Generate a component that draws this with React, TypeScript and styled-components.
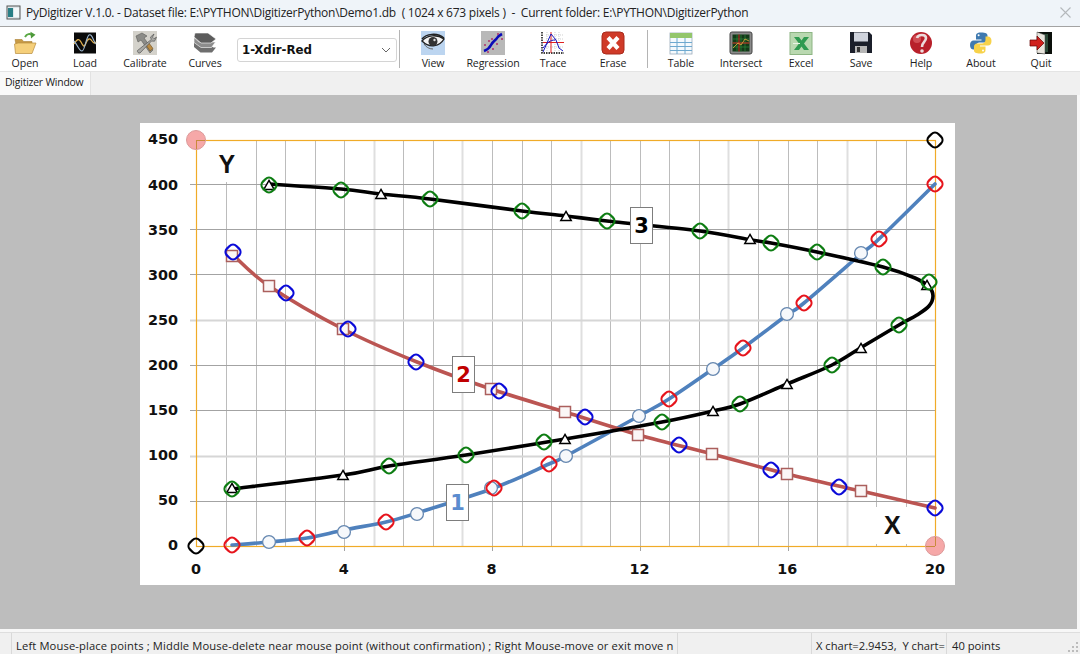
import React from "react";
import styled, { createGlobalStyle } from "styled-components";

const Global = createGlobalStyle`
  html, body { margin: 0; padding: 0; background: #f0f0f0; }
  * { box-sizing: border-box; }
`;

const UI = `"Open Sans", "Noto Sans", sans-serif`;

const Window = styled.div`
  width: 1080px; height: 654px; display: flex; flex-direction: column; overflow: hidden;
  font-family: ${UI}; color: #1a1a1a; background: #f0f0f0;
`;
const TitleBar = styled.div`
  height: 27px; flex: none; display: flex; align-items: center; padding: 0 8px 1px 6px; gap: 5px;
  background: #eff4f9; border-bottom: 1px solid #a3a3a3; font-size: 12px; white-space: pre;
`;
const TitleText = styled.span` flex: 1; letter-spacing: -0.24px; color: #222; `;
const Toolbar = styled.div`
  height: 45px; flex: none; display: flex; align-items: stretch; background: #fff;
  border-bottom: 1px solid #e4e4e4;
`;
const ToolButton = styled.div<{ $first?: boolean }>`
  width: 60px; flex: none; display: flex; flex-direction: column; align-items: center;
  padding-top: 4px; margin-left: ${p => (p.$first ? "-5px" : "0")};
`;
const ToolLabel = styled.span` font-size: 10.6px; line-height: 14px; margin-top: 1px; white-space: nowrap; color: #222; letter-spacing: -0.1px; `;
const Icon = styled.svg` width: 24px; height: 24px; display: block; flex: none; `;
const Combo = styled.div`
  width: 160px; height: 24px; margin: 11px 0 0 2px; flex: none; display: flex; align-items: center;
  justify-content: space-between; padding: 0 5px 0 4px; background: #fff; border: 1px solid #d4d4d4; border-radius: 3px;
  font: bold 11.8px "DejaVu Sans", sans-serif; color: #111;
`;
const Separator = styled.div<{ $after: number; $before: number }>`
  width: 1px; flex: none; background: #b4b4b4; margin: 3px ${p => p.$after}px 3px ${p => p.$before}px;
`;
const TabRow = styled.div` height: 23px; flex: none; background: #f0f0f0; display: flex; `;
const Tab = styled.div`
  width: 91px; background: #f9f9f9; border-right: 1px solid #e2e2e2; font-size: 10.4px; letter-spacing: -0.2px; line-height: 20px; padding-left: 5px; white-space: nowrap;
`;
const WorkArea = styled.div` flex: none; height: 537px; padding: 0 3px 3px 0; background: #f7f7f7; `;
const Canvas = styled.div` height: 534px; background: #bdbdbd; padding: 28px 0 0 140px; `;
const ChartSvg = styled.svg` display: block; width: 815px; height: 462px; background: #fff; `;
const StatusBar = styled.div`
  height: 22px; flex: 1; display: flex; background: #f0f0f0; border-top: 1px solid #dedede; font-size: 11.2px; position: relative;
`;
const Pane = styled.div<{ $w: number; $pad: number; $last?: boolean; $spacing?: number }>`
  width: ${p => p.$w}px; flex: none; padding-left: ${p => p.$pad}px; line-height: 25px; white-space: pre; color: #222;
  border-right: ${p => (p.$last ? "none" : "1px solid #d9d9d9")};
  letter-spacing: ${p => p.$spacing ?? 0}px;
`;
const Grip = styled.svg` position: absolute; right: 1px; bottom: 1px; width: 12px; height: 12px; `;

// --- chart data, in page pixels ---
const X0 = 196, X1 = 935, Y0 = 546, Y1 = 140;
type P = [number, number];

const curve1: P[] = [[232,545],[269,542],[307,538],[344,530],[386,522],[417,513],[494,488],[549,464],[566,456],[639,416],[669,399],[713,369],[743,348],[787,315],[804,303],[861,254],[879,239],[935,184]];
const curve2: P[] = [[233,255],[269,286],[343,329],[417,362],[491,389],[565,412],[639,435],[712,454],[787,474],[861,491],[935,508]];
const curve3: P[] = [[269,184],[341,189],[381,194],[430,199],[522,211],[566,216],[607,221],[700,231],[751,240],[771,243],[817,252],[883,267],[915,278],[929,287],[933,296],[929,306],[917,315],[899,325],[862,347],[832,365],[787,384],[740,404],[713,411],[662,422],[565,439],[466,455],[389,466],[343,475],[232,489]];

const openCircles: P[] = [[269,542],[344,532],[417,514],[491,488],[566,456],[639,416],[713,369],[787,314],[861,253]];
const squares: P[] = [[232,256],[269,286],[343,329],[491,389],[565,412],[638,435],[712,454],[787,474],[861,491]];
const triangles: P[] = [[269,185],[381,194],[566,216],[750,239],[927,285],[861,348],[787,384],[713,411],[565,439],[343,475],[232,488]];
const reds: P[] = [[232,545],[307,538],[386,522],[494,488],[549,464],[669,399],[743,348],[804,303],[879,239],[935,184]];
const blues: P[] = [[233,252],[286,293],[348,329],[416,362],[499,391],[585,417],[679,445],[771,470],[839,487],[935,508]];
const greens: P[] = [[269,185],[341,190],[430,199],[522,211],[607,221],[700,231],[771,243],[817,252],[883,267],[929,282],[899,325],[832,365],[740,404],[662,422],[544,442],[466,455],[389,466],[232,489]];

const H_LINES: [number, boolean][] = [[501, false], [456, true], [410, false], [365, false], [320, true], [274, false], [229, false], [184, false]];
const LIGHT_V = new Set([6, 9, 13, 18, 22]);

function spline(pts: P[]): string {
  let d = `M${pts[0][0]} ${pts[0][1]}`;
  for (let i = 0; i < pts.length - 1; i++) {
    const a = pts[Math.max(i - 1, 0)], b = pts[i], c = pts[i + 1], e = pts[Math.min(i + 2, pts.length - 1)];
    const c1x = b[0] + (c[0] - a[0]) / 6, c1y = b[1] + (c[1] - a[1]) / 6;
    const c2x = c[0] - (e[0] - b[0]) / 6, c2y = c[1] - (e[1] - b[1]) / 6;
    d += `C${c1x.toFixed(1)} ${c1y.toFixed(1)} ${c2x.toFixed(1)} ${c2y.toFixed(1)} ${c[0]} ${c[1]}`;
  }
  return d;
}

const Ring = ({ p, color }: { p: P; color: string }) => (
  <rect x={p[0] - 6.7} y={p[1] - 6.7} width={13.4} height={13.4} rx={4.8} fill="none" stroke={color} strokeWidth={2.2}
    transform={`rotate(45 ${p[0]} ${p[1]})`} />
);

const AxisText = styled.text` font: bold 14.4px "DejaVu Sans", sans-serif; fill: #111; `;
const AxisLetter = styled.text` font: bold 25px "Liberation Sans", sans-serif; fill: #111; `;
const BoxText = styled.text<{ $c: string }>` font: bold 21px "DejaVu Sans", sans-serif; fill: ${p => p.$c}; `;

const NumberBox = ({ x, y, text, color }: { x: number; y: number; text: string; color: string }) => (
  <g>
    <rect x={x + 0.5} y={y + 0.5} width={22} height={36} fill="#fff" stroke="#7d7d7d" />
    <BoxText $c={color} x={x + 11.5} y={y + 26} textAnchor="middle">{text}</BoxText>
  </g>
);

const Chart = () => {
  const vs = Array.from({ length: 24 }, (_, i) => i + 1);
  return (
    <ChartSvg viewBox="140 123 815 462">
      {vs.map(n => {
        const x = Math.round(X0 + 0.4 + n * 29.56) + 0.5;
        return <line key={n} x1={x} x2={x} y1={Y1} y2={Y0} stroke={LIGHT_V.has(n) ? "#dfdfdf" : "#bcbcbc"} strokeWidth={LIGHT_V.has(n) ? 2 : 1} />;
      })}
      {H_LINES.map(([y, light]) => (
        <line key={y} x1={190} x2={X1} y1={y + 0.5} y2={y + 0.5} stroke={light ? "#d6d6d6" : "#a3a3a3"} strokeWidth={light ? 2 : 1} />
      ))}
      {[4, 8, 12, 16].map(u => {
        const x = Math.round(X0 + 0.4 + u * 36.95) + 0.5;
        return <line key={u} x1={x} x2={x} y1={Y0} y2={551} stroke="#a3a3a3" />;
      })}
      <rect x={215} y={141} width={26} height={41} fill="#fff" />
      <rect x={870} y={507} width={40} height={37} fill="#fff" />
      <rect x={X0 + 0.5} y={Y1 + 0.5} width={X1 - X0} height={Y0 - Y1} fill="none" stroke="#f0ab28" strokeWidth={1.2} />

      <path d={spline(curve1)} fill="none" stroke="#4f81bd" strokeWidth={3.6} strokeLinecap="round" />
      <path d={spline(curve2)} fill="none" stroke="#bb5552" strokeWidth={3.6} strokeLinecap="round" />
      <path d={spline(curve3)} fill="none" stroke="#000" strokeWidth={3.6} strokeLinecap="round" />

      {openCircles.map((p, i) => <circle key={i} cx={p[0]} cy={p[1]} r={6.4} fill="#f6f8fb" stroke="#6587b0" strokeWidth={1.3} />)}
      {squares.map((p, i) => <rect key={i} x={p[0] - 5.5} y={p[1] - 5.5} width={11} height={11} fill="#fbf6f6" stroke="#ab5f5d" strokeWidth={1.5} />)}
      {triangles.map((p, i) => <path key={i} d={`M${p[0]} ${p[1] - 4.6}L${p[0] + 5.2} ${p[1] + 4.5}H${p[0] - 5.2}Z`} fill="#fff" stroke="#000" strokeWidth={1.5} />)}
      {greens.map((p, i) => <Ring key={i} p={p} color="#0d7d12" />)}
      {reds.map((p, i) => <Ring key={i} p={p} color="#e6141c" />)}
      {blues.map((p, i) => <Ring key={i} p={p} color="#0a0ad8" />)}

      <circle cx={X0} cy={Y1} r={9.5} fill="#f6a8a8" stroke="#dc9a9a" />
      <line x1={X0} x2={X0 + 9} y1={Y1 + 0.5} y2={Y1 + 0.5} stroke="#c98a3a" />
      <line x1={X0 + 0.5} x2={X0 + 0.5} y1={Y1} y2={Y1 + 9} stroke="#c98a3a" />
      <circle cx={X1} cy={Y0} r={9.5} fill="#f6a8a8" stroke="#dc9a9a" />
      <line x1={X1 - 9} x2={X1} y1={Y0 + 0.5} y2={Y0 + 0.5} stroke="#c98a3a" />
      <line x1={X1 + 0.5} x2={X1 + 0.5} y1={Y0 - 9} y2={Y0} stroke="#c98a3a" />
      <Ring p={[X0, Y0]} color="#000" />
      <Ring p={[X1, Y1]} color="#000" />

      <NumberBox x={446} y={484} text="1" color="#5b8ccf" />
      <NumberBox x={452} y={356} text="2" color="#c00000" />
      <NumberBox x={630} y={207} text="3" color="#000" />

      {[0, 50, 100, 150, 200, 250, 300, 350, 400, 450].map(v => (
        <AxisText key={v} x={178} y={Y0 - v * 0.9022 + 4.4} textAnchor="end">{v}</AxisText>
      ))}
      {[0, 4, 8, 12, 16, 20].map(u => (
        <AxisText key={u} x={X0 + u * 36.95} y={574} textAnchor="middle">{u}</AxisText>
      ))}
      <AxisLetter x={218.5} y={173}>Y</AxisLetter>
      <AxisLetter x={884} y={534}>X</AxisLetter>
    </ChartSvg>
  );
};

// --- toolbar icons ---
const I = ({ children }: { children: React.ReactNode }) => <Icon viewBox="0 0 24 24">{children}</Icon>;

const OpenIcon = () => (
  <I>
    <path d="M2 8.500h7l1.500 2H19v3H3z" fill="#c89a45" stroke="#a97f33" strokeWidth=".6" />
    <path d="M5 12h18l-4 10.500H2.500L1.500 13z" fill="#f5cf7a" stroke="#b88d3e" strokeWidth=".7" />
    <path d="M12 6c2-3.500 5-3.500 7-2" fill="none" stroke="#5aa845" strokeWidth="2" />
    <path d="M17.500 .8l5 3-4.500 3.700z" fill="#4d9a3a" />
  </I>
);
const LoadIcon = () => (
  <I>
    <rect x="1" y="1.500" width="22" height="21" fill="#0a0a0a" />
    <path d="M1 13c3-5 5-6 7-2s3 6 5 1 4-5 6-2 3 2 4 1" fill="none" stroke="#e0b050" strokeWidth="1.300" />
    <path d="M1 10c3 3 5 10 8 10s4-14 7-16 5 8 7 9" fill="none" stroke="#9fb9d2" strokeWidth="1.100" />
  </I>
);
const CalibrateIcon = () => (
  <I>
    <rect width="24" height="24" fill="#d4d2cb" />
    <path d="M3 5l6-3 5 3-3 2 9 12-3 3L8 9 5 11z" fill="#8c8c88" stroke="#5a5a58" strokeWidth=".6" />
    <path d="M13 14l4 6 3-2.500-4.500-6z" fill="#b98a42" stroke="#6e4f1f" strokeWidth=".6" />
    <path d="M21 3l-3.500 3 .8 2.500L4.500 19.500a2 2 0 0 0 2.500 2.500L18.500 10l3 .2 2-4-2.500 1.500-1.500-1.500z" fill="#a8a8a4" stroke="#555" strokeWidth=".7" />
  </I>
);
const CurvesIcon = () => (
  <I>
    <path d="M1 8.500l3-2 2.500 2 14 8 2.500 0-4 5H7.500L1 16z" fill="#6e6e6e" />
    <path d="M1 6.500L6 11h16.500l-4 5.500H8L1 11.500z" fill="#8c8c8c" stroke="#fff" strokeWidth=".6" />
    <path d="M2 2h13l8 6-5 4H8L1 6z" fill="#5c5c5c" stroke="#fff" strokeWidth=".6" />
  </I>
);
const ViewIcon = () => (
  <I>
    <rect width="24" height="24" fill="#bcd5f0" />
    <path d="M1 10c5-6 15-7 22-2-4 7-14 10-22 2z" fill="#f4f4f4" stroke="#222" strokeWidth="1.400" />
    <circle cx="12" cy="10.500" r="4.500" fill="#333" />
    <circle cx="13.500" cy="9" r="1.200" fill="#ddd" />
    <path d="M3 13c2 3 5 5 9 5" fill="none" stroke="#666" />
    <path d="M1 8C5 3 16 1 23 7" fill="none" stroke="#222" strokeWidth="1.500" />
  </I>
);
const RegressionIcon = () => (
  <I>
    <rect width="24" height="24" fill="#b8b8b8" />
    <path d="M3 20c3-1 5-2 7-6s5-5 6-7 3-3 5-4" fill="none" stroke="#0b0bb8" strokeWidth="2.600" />
    <g fill="#b0306a">
      <circle cx="4" cy="14" r="1" /><circle cx="8" cy="10" r="1" /><circle cx="11" cy="8" r="1" />
      <circle cx="17" cy="3" r="1" /><circle cx="21" cy="8" r="1" /><circle cx="16" cy="13" r="1" />
      <circle cx="12" cy="18" r="1" /><circle cx="7" cy="21" r="1" />
    </g>
  </I>
);
const TraceIcon = () => (
  <I>
    <path d="M1 1v21h22" fill="none" stroke="#000" strokeWidth="1.400" strokeDasharray="1.500 1" />
    <path d="M5 4h17M5 8h17M5 16h17M6 1v19M14 1v19M18 1v19" stroke="#bbb" strokeWidth=".7" strokeDasharray="1 1" />
    <path d="M2 11.500h21M10 1v21" stroke="#e02020" strokeWidth="1" />
    <path d="M2 21L10 3l5 6 3 8 4 3M2 17c4-5 7-8 12-8" fill="none" stroke="#1515c0" strokeWidth="1" />
  </I>
);
const EraseIcon = () => (
  <I>
    <rect x="1" y="1" width="22" height="22" rx="4" fill="#cf3a28" stroke="#a82a1c" />
    <path d="M7 6.500l10 11M17 6.500l-10 11" stroke="#fff" strokeWidth="4.200" />
  </I>
);
const TableIcon = () => (
  <I>
    <rect x="1" y="2" width="22" height="21" fill="#f5fafd" stroke="#9ab" strokeWidth=".8" />
    <rect x="1" y="2" width="22" height="5" fill="#93c66b" />
    <path d="M1 11.500h22M1 15.500h22M1 19.500h22M8 7v16M16 7v16" stroke="#6fa9cf" strokeWidth="1" />
  </I>
);
const IntersectIcon = () => (
  <I>
    <rect x="1" y="1" width="22" height="22" rx="2" fill="#8a8a8a" stroke="#444" />
    <rect x="3.500" y="3.500" width="17" height="17" fill="#123a18" />
    <path d="M3.500 8h17M3.500 12h17M3.500 16h17M8 3.500v17M12 3.500v17M16 3.500v17" stroke="#2f8a3c" strokeWidth=".7" />
    <path d="M3.500 12h17M10 3.500v17" stroke="#d42020" strokeWidth="1" />
    <path d="M4 17l5-5 3 2 4-6 4 2" fill="none" stroke="#e8b040" strokeWidth=".8" />
  </I>
);
const ExcelIcon = () => (
  <I>
    <rect x="1" y="1.500" width="22" height="22" fill="#b9d8b0" stroke="#8db584" />
    <path d="M5 6h5l2.500 3.500L15 6h5l-5 6.500 5 6.500h-5l-2.500-3.500L10 19H5l5-6.500z" fill="#2f9a50" />
    <path d="M4 12h7v1H4z" fill="#e8f4e4" />
  </I>
);
const SaveIcon = () => (
  <I>
    <path d="M1 1h19l3 3v18H1z" fill="#1b1f2a" />
    <rect x="5" y="1.500" width="14" height="9" fill="#cfd3dc" />
    <rect x="6" y="15" width="12" height="7" fill="#b6b6b6" />
    <rect x="8" y="16" width="3" height="5" fill="#333" />
  </I>
);
const HelpIcon = () => (
  <I>
    <circle cx="12" cy="12" r="11" fill="#b8202a" />
    <circle cx="8" cy="8" r="4" fill="#e06a70" opacity=".6" />
    <path d="M8 7c1-4 9-4 9 0 0 4-4 4-4 9" fill="none" stroke="#ecdcdc" strokeWidth="2.600" />
    <circle cx="13" cy="20" r="1.800" fill="#ecdcdc" />
  </I>
);
const PY_HALF = "M12 1.500C6.500 1.500 7 4 7 6v2.500h5.500v1H4.500C2.500 9.500 1 11 1 14s1.500 4.500 3.500 4.500H7v-3.300c0-2 1.500-3.700 3.500-3.700h5c1.700 0 3-1.400 3-3V4.500c0-1.700-1.700-3-6.500-3z";
const AboutIcon = () => (
  <I>
    <path d={PY_HALF} fill="#3f7ab0" />
    <path d={PY_HALF} fill="#f7d24a" transform="rotate(180 11.750 12)" />
    <circle cx="9.600" cy="4.300" r="1" fill="#fff" />
    <circle cx="14" cy="19.600" r="1" fill="#fff" />
  </I>
);
const QuitIcon = () => (
  <I>
    <rect x="8" y="1" width="15" height="22" fill="#0a0f0a" />
    <path d="M10 3l9 0v18l-9 0z" fill="#2d4a38" />
    <path d="M8 1l8 3v19l-8-1z" fill="#e8e4dc" stroke="#444" strokeWidth=".5" />
    <path d="M1 9h7V5l7 7-7 7v-4H1z" fill="#d0201c" stroke="#600" strokeWidth=".7" />
  </I>
);

const AppIcon = styled.svg` width: 15px; height: 15px; flex: none; `;
const CloseIcon = styled.svg` width: 13px; height: 13px; flex: none; `;

const tools1: [string, React.FC][] = [["Open", OpenIcon], ["Load", LoadIcon], ["Calibrate", CalibrateIcon], ["Curves", CurvesIcon]];
const tools2: [string, React.FC][] = [["View", ViewIcon], ["Regression", RegressionIcon], ["Trace", TraceIcon], ["Erase", EraseIcon]];
const tools3: [string, React.FC][] = [["Table", TableIcon], ["Intersect", IntersectIcon], ["Excel", ExcelIcon], ["Save", SaveIcon], ["Help", HelpIcon], ["About", AboutIcon], ["Quit", QuitIcon]];

const Tool = ({ label, icon: Ic, first }: { label: string; icon: React.FC; first?: boolean }) => (
  <ToolButton $first={first}>
    <Ic />
    <ToolLabel>{label}</ToolLabel>
  </ToolButton>
);

export default function App() {
  return (
    <Window>
      <Global />
      <TitleBar>
        <AppIcon viewBox="0 0 15 15">
          <rect x="1" y="1" width="13" height="13" fill="#dfe6ea" stroke="#555" />
          <rect x="2" y="3" width="5" height="9" fill="#2a7f86" />
          <rect x="8" y="3" width="5" height="9" fill="#f4f8fa" />
        </AppIcon>
        <TitleText>{"PyDigitizer V.1.0. - Dataset file: E:\\PYTHON\\DigitizerPython\\Demo1.db  ( 1024 x 673 pixels )  -  Current folder: E:\\PYTHON\\DigitizerPython"}</TitleText>
        <CloseIcon viewBox="0 0 13 13">
          <path d="M1.500 1.500l10 10M11.500 1.500l-10 10" stroke="#b4b8bc" strokeWidth="1.100" />
        </CloseIcon>
      </TitleBar>
      <Toolbar>
        {tools1.map(([l, ic], i) => <Tool key={l} label={l} icon={ic} first={i === 0} />)}
        <Combo>
          <span>1-Xdir-Red</span>
          <svg width="10" height="6" viewBox="0 0 10 6"><path d="M1 1l4 4 4-4" fill="none" stroke="#666" /></svg>
        </Combo>
        <Separator $before={2} $after={3} />
        {tools2.map(([l, ic]) => <Tool key={l} label={l} icon={ic} />)}
        <Separator $before={4} $after={3} />
        {tools3.map(([l, ic]) => <Tool key={l} label={l} icon={ic} />)}
      </Toolbar>
      <TabRow><Tab>Digitizer Window</Tab></TabRow>
      <WorkArea>
        <Canvas><Chart /></Canvas>
      </WorkArea>
      <StatusBar>
        <Pane $w={12} $pad={0} />
        <Pane $w={666} $pad={4} $spacing={0.13}>Left Mouse-place points ; Middle Mouse-delete near mouse point (without confirmation) ; Right Mouse-move or exit move n</Pane>
        <Pane $w={134} $pad={0} />
        <Pane $w={135} $pad={4}>{"X chart=2.9453,  Y chart="}</Pane>
        <Pane $w={100} $pad={5} $last>40 points</Pane>
        <Grip viewBox="0 0 12 12">
          <g fill="#bcbcbc">
            <rect x="9" y="9" width="2" height="2" /><rect x="5" y="9" width="2" height="2" /><rect x="1" y="9" width="2" height="2" />
            <rect x="9" y="5" width="2" height="2" /><rect x="5" y="5" width="2" height="2" /><rect x="9" y="1" width="2" height="2" />
          </g>
        </Grip>
      </StatusBar>
    </Window>
  );
}
